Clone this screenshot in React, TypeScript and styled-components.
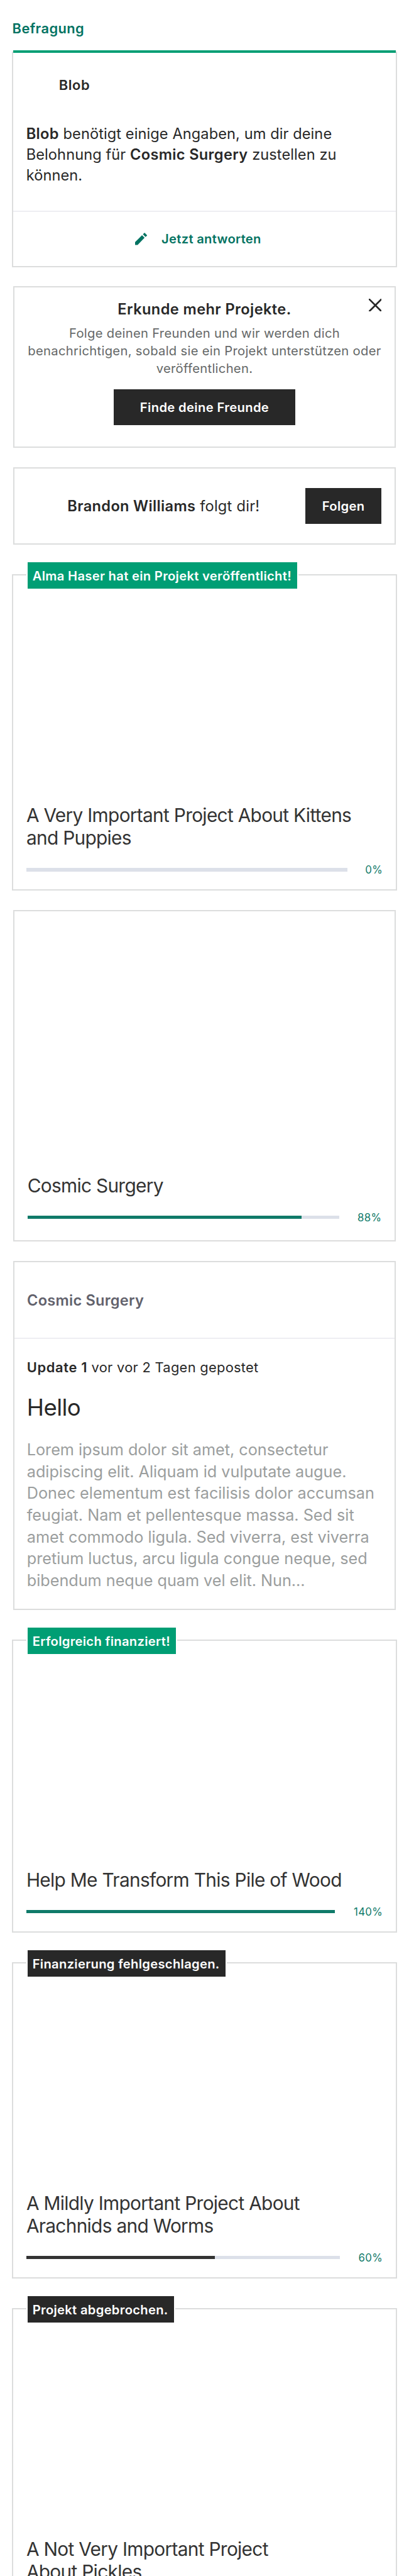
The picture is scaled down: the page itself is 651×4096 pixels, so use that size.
import React from 'react';
import styled, { createGlobalStyle, css } from 'styled-components';

/* Converts design units to CSS pixels. */
const u = (n: number) => `${(n * 0.8678).toFixed(3)}px`;

const color = {
  ink: '#282828',
  title: '#333333',
  grey: '#656868',
  slate: '#62626c',
  mute: '#9b9e9e',
  border: '#dcdddd',
  rule: '#eeeef2',
  track: '#dce0e9',
  green: '#009e74',
  deepGreen: '#037362',
  barGreen: '#0f7a69',
};

const GlobalStyle = createGlobalStyle`
  *, *::before, *::after { box-sizing: border-box; }
  html, body { margin: 0; padding: 0; background: #fff; }
  h2, h3, h4, p { margin: 0; font-weight: 400; }
  button { border: 0; margin: 0; padding: 0; font-family: inherit; cursor: pointer; }
  b { font-weight: 600; letter-spacing: 0.014em; }
`;

const Page = styled.main`
  width: 651px;
  height: 4096px;
  overflow: hidden;
  background: #fff;
  color: ${color.ink};
  font-family: Inter, 'Liberation Sans', sans-serif;
`;

const SectionTitle = styled.h2`
  height: ${u(92)};
  padding: ${u(31.8)} 0 0 ${u(22.6)};
  font-size: ${u(25.2)};
  line-height: ${u(40)};
  font-weight: 600;
  letter-spacing: 0.0175em;
  color: ${color.deepGreen};
`;

const Accent = styled.div`
  position: relative;
  height: 4px;
  margin: 0 ${u(24)};
  background: ${color.green};
`;

const Card = styled.section<{ $height: number; $gap: number; $wide?: boolean }>`
  position: relative;
  display: flex;
  flex-direction: column;
  height: ${(p) => u(p.$height)};
  margin: ${(p) => u(p.$gap)} ${(p) => u(p.$wide ? 22 : 24)} 0;
  border: 2px solid ${color.border};
`;

const SurveyCard = styled(Card)`
  border-top: 0;
`;

const SurveyBody = styled.div`
  flex: 1;
  padding-top: ${u(41.5)};
`;

const Creator = styled.h4`
  padding-left: ${u(83.6)};
  font-size: ${u(25.2)};
  line-height: ${u(40)};
  font-weight: 600;
  letter-spacing: 0.031em;
`;

const SurveyText = styled.p`
  margin: ${u(51)} 0 0 ${u(23.8)};
  font-size: ${u(27.2)};
  line-height: ${u(37.9)};
  letter-spacing: 0.0035em;
  white-space: nowrap;
`;

const Action = styled.div`
  display: flex;
  align-items: center;
  height: ${u(102)};
  padding-left: ${u(223)};
  border-top: 2px solid ${color.rule};
  color: ${color.deepGreen};
  font-size: ${u(23.3)};
  font-weight: 600;
  letter-spacing: 0.0135em;
`;

const PencilIcon = styled.svg`
  width: ${u(22.4)};
  height: ${u(22.4)};
  margin-right: ${u(26.6)};
  fill: currentColor;
`;

const FindFriends = styled(Card)`
  align-items: center;
  padding-top: ${u(21)};
  text-align: center;
`;

const FindTitle = styled.h3`
  font-size: ${u(27.2)};
  line-height: ${u(40)};
  font-weight: 600;
  letter-spacing: 0.017em;
`;

const FindText = styled.p`
  margin: ${u(7.4)} 0 ${u(22.7)};
  font-size: ${u(23.3)};
  line-height: ${u(32)};
  letter-spacing: 0.0148em;
  color: ${color.grey};
  white-space: nowrap;
`;

const DarkButton = styled.button<{ $width: number }>`
  width: ${(p) => u(p.$width)};
  height: ${u(66)};
  background: ${color.ink};
  color: #fff;
  font-size: ${u(23.3)};
  font-weight: 600;
  letter-spacing: 0.0175em;
`;

const CloseButton = styled.button`
  position: absolute;
  top: ${u(20.6)};
  right: ${u(24)};
  width: ${u(24)};
  height: ${u(24)};
  background: none;
  color: ${color.ink};

  svg {
    display: block;
    width: 100%;
    height: 100%;
  }
`;

const Follower = styled(Card)`
  flex-direction: row;
  align-items: center;
  justify-content: space-between;
  padding: 0 ${u(24)} 0 ${u(97.4)};
  font-size: ${u(27.2)};
  letter-spacing: 0.011em;
`;

const ProjectCard = styled(Card)`
  justify-content: flex-end;
  padding: 0 ${u(24)} ${(p) => u(p.$wide ? 26 : 32)};
`;

const Tag = styled.span<{ $dark?: boolean }>`
  position: absolute;
  top: ${u(-26)};
  left: ${u(24)};
  display: flex;
  align-items: center;
  height: ${u(53)};
  padding: 0 ${u(10.4)} 0 ${u(9)};
  border: 2px solid #fff;
  background: ${(p) => (p.$dark ? color.ink : color.green)};
  color: #fff;
  font-size: ${u(23.3)};
  font-weight: 600;
  letter-spacing: 0.0145em;
  white-space: nowrap;
`;

const ProjectTitle = styled.h3`
  margin-bottom: ${u(27)};
  font-size: ${u(34.4)};
  line-height: ${u(42)};
  letter-spacing: -0.0235em;
  color: ${color.title};
  white-space: nowrap;
`;

const Progress = styled.div`
  display: flex;
  align-items: center;
  height: ${u(20)};
`;

const Track = styled.div`
  flex: 1;
  height: ${u(6)};
  background: ${color.track};
`;

const Fill = styled.div<{ $dark?: boolean }>`
  height: 100%;
  background: ${(p) => (p.$dark ? color.title : color.barGreen)};
`;

const Percent = styled.span<{ $width: number }>`
  width: ${(p) => u(p.$width)};
  text-align: right;
  font-size: ${u(19.4)};
  letter-spacing: 0.018em;
  color: ${color.barGreen};
`;

const UpdateHeader = styled.header`
  display: flex;
  align-items: center;
  height: ${u(140)};
  padding-left: ${u(23.4)};
  border-bottom: 2px solid ${color.rule};
  color: ${color.slate};
  font-size: ${u(27.2)};
  font-weight: 600;
  letter-spacing: 0.0097em;
`;

const inset = css`
  margin-left: ${u(23)};
  white-space: nowrap;
`;

const UpdateMeta = styled.p`
  ${inset}
  margin-top: ${u(31.8)};
  font-size: ${u(25.2)};
  line-height: ${u(40)};
  letter-spacing: 0.013em;

  b {
    letter-spacing: 0.03em;
  }
`;

const UpdateTitle = styled.h3`
  ${inset}
  margin-top: ${u(29.5)};
  font-size: ${u(42.2)};
  line-height: ${u(50)};
  letter-spacing: -0.0157em;
`;

const UpdateText = styled.p`
  ${inset}
  margin-top: ${u(32)};
  font-size: ${u(29.1)};
  line-height: ${u(39.95)};
  letter-spacing: -0.0012em;
  color: ${color.mute};
`;

interface ProjectProps {
  lines: string[];
  percent?: number;
  percentWidth?: number;
  height: number;
  gap: number;
  tag?: string;
  dark?: boolean;
}

function Lines({ items }: { items: string[] }) {
  return (
    <>
      {items.map((line, i) => (
        <React.Fragment key={line}>
          {i > 0 && <br />}
          {line}
        </React.Fragment>
      ))}
    </>
  );
}

function Project({ lines, percent, percentWidth = 78, height, gap, tag, dark }: ProjectProps) {
  return (
    <ProjectCard $height={height} $gap={gap} $wide={Boolean(tag)}>
      {tag && <Tag $dark={dark}>{tag}</Tag>}
      <ProjectTitle>
        <Lines items={lines} />
      </ProjectTitle>
      <Progress>
        {percent !== undefined && (
          <>
            <Track>
              <Fill $dark={dark} style={{ width: `${Math.min(percent, 100)}%` }} />
            </Track>
            <Percent $width={percentWidth}>{percent}%</Percent>
          </>
        )}
      </Progress>
    </ProjectCard>
  );
}

export default function App() {
  return (
    <Page>
      <GlobalStyle />
      <SectionTitle>Befragung</SectionTitle>
      <Accent />
      <SurveyCard $height={395.4} $gap={-2} $wide>
        <SurveyBody>
          <Creator>Blob</Creator>
          <SurveyText>
            <b>Blob</b> benötigt einige Angaben, um dir deine
            <br />
            Belohnung für <b>Cosmic Surgery</b> zustellen zu
            <br />
            können.
          </SurveyText>
        </SurveyBody>
        <Action>
          <PencilIcon viewBox="0 0 67 67">
            <path d="M0 67V52L38 14L52 28L14 67ZM43 9L52 0L67 15L57 23Z" />
          </PencilIcon>
          Jetzt antworten
        </Action>
      </SurveyCard>

      <FindFriends $height={296} $gap={34}>
        <FindTitle>Erkunde mehr Projekte.</FindTitle>
        <FindText>
          Folge deinen Freunden und wir werden dich
          <br />
          benachrichtigen, sobald sie ein Projekt unterstützen oder
          <br />
          veröffentlichen.
        </FindText>
        <DarkButton $width={332}>Finde deine Freunde</DarkButton>
        <CloseButton aria-label="Schließen">
          <svg viewBox="0 0 24 24" fill="none" stroke="currentColor" strokeWidth="3.2">
            <path d="M1.3 1.3L22.7 22.7M22.7 1.3L1.3 22.7" strokeLinecap="round" />
          </svg>
        </CloseButton>
      </FindFriends>

      <Follower $height={142} $gap={36}>
        <span>
          <b>Brandon Williams</b> folgt dir!
        </span>
        <DarkButton $width={140}>Folgen</DarkButton>
      </Follower>

      <Project
        tag="Alma Haser hat ein Projekt veröffentlicht!"
        lines={['A Very Important Project About Kittens', 'and Puppies']}
        percent={0}
        percentWidth={65}
        height={580}
        gap={54}
      />
      <Project lines={['Cosmic Surgery']} percent={88} percentWidth={78.2} height={607} gap={36} />

      <Card $height={639} $gap={36}>
        <UpdateHeader>Cosmic Surgery</UpdateHeader>
        <UpdateMeta>
          <b>Update 1</b> vor vor 2 Tagen gepostet
        </UpdateMeta>
        <UpdateTitle>Hello</UpdateTitle>
        <UpdateText>
          <Lines
            items={[
              'Lorem ipsum dolor sit amet, consectetur',
              'adipiscing elit. Aliquam id vulputate augue.',
              'Donec elementum est facilisis dolor accumsan',
              'feugiat. Nam et pellentesque massa. Sed sit',
              'amet commodo ligula. Sed viverra, est viverra',
              'pretium luctus, arcu ligula congue neque, sed',
              'bibendum neque quam vel elit. Nun...',
            ]}
          />
        </UpdateText>
      </Card>

      <Project
        tag="Erfolgreich finanziert!"
        lines={['Help Me Transform This Pile of Wood']}
        percent={140}
        percentWidth={88}
        height={537}
        gap={54}
      />
      <Project
        tag="Finanzierung fehlgeschlagen."
        lines={['A Mildly Important Project About', 'Arachnids and Worms']}
        percent={60}
        height={580}
        gap={54}
        dark
      />
      <Project
        tag="Projekt abgebrochen."
        lines={['A Not Very Important Project', 'About Pickles']}
        height={580}
        gap={54}
        dark
      />
    </Page>
  );
}
